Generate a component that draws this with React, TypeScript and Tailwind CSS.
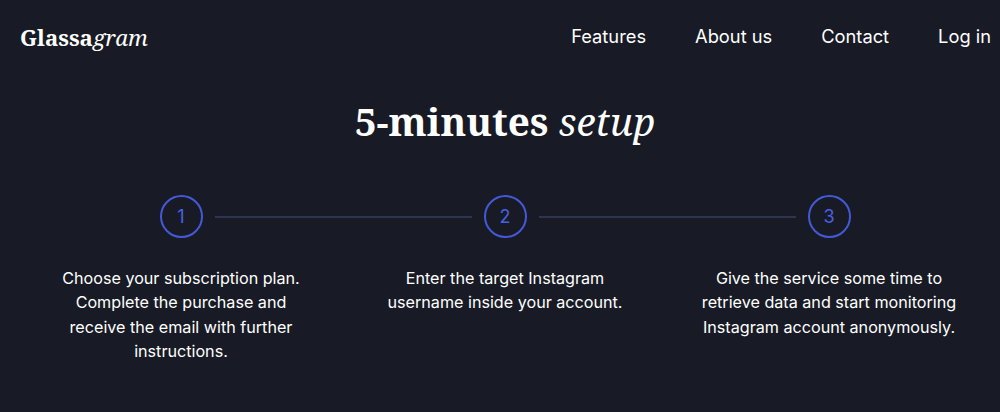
const serif = "font-['Noto_Serif','DejaVu_Serif',serif]";

const steps = [
  "Choose your subscription plan. Complete the purchase and receive the email with further instructions.",
  "Enter the target Instagram username inside your account.",
  "Give the service some time to retrieve data and start monitoring Instagram account anonymously.",
];

function StepCircle({ n }: { n: number }) {
  return (
    <div className="w-[43px] h-[43px] shrink-0 rounded-full border-2 border-[#4459d8] flex items-center justify-center text-[18px] text-[#4a60e4]">
      {n}
    </div>
  );
}

export default function App() {
  return (
    <div className="w-[1000px] h-[412px] overflow-hidden bg-[#181b25] text-white font-['Inter',sans-serif]">
      {/* Nav */}
      <nav className="h-[72px] flex items-center justify-between pl-[20px] pr-[9px]">
        <div className={`${serif} text-[22.2px] font-bold mt-[3px]`}>
          Glassa<span className="italic font-normal">gram</span>
        </div>
        <div className="flex items-center gap-[49px] text-[18.3px] mt-[1px]">
          <a>Features</a>
          <a>About us</a>
          <a>Contact</a>
          <a>Log in</a>
        </div>
      </nav>

      <main className="pl-[10px] flex flex-col items-center">
        <h1 className={`${serif} text-[38.7px] leading-[50px] font-bold mt-[24px]`}>
          5-minutes <span className="italic font-normal">setup</span>
        </h1>

        {/* Steps */}
        <div className="w-[691px] mt-[49px] flex items-center">
          <StepCircle n={1} />
          <div className="flex-1 h-[2px] bg-[#2f3450] mx-[12px]" />
          <StepCircle n={2} />
          <div className="flex-1 h-[2px] bg-[#2f3450] mx-[12px]" />
          <StepCircle n={3} />
        </div>

        <div className="mt-[28px] grid grid-cols-[264px_264px_264px] gap-x-[60px] text-center text-[16.15px] leading-[24.3px]">
          {steps.map((s) => (
            <p key={s}>{s}</p>
          ))}
        </div>
      </main>
    </div>
  );
}
